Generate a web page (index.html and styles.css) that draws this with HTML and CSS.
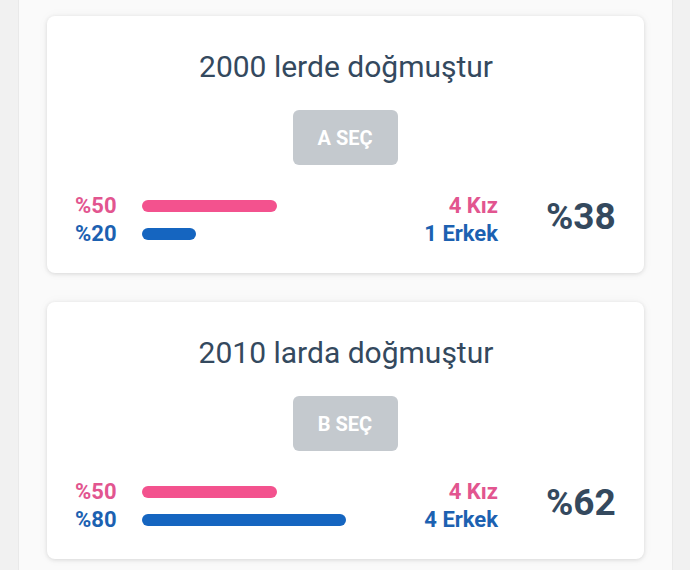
FILE: index.html
```html
<!DOCTYPE html>
<html lang="tr">
<head>
  <meta charset="UTF-8" />
  <title>Anket sonuçları</title>
  <meta name="viewport" content="width=device-width, initial-scale=1.0" />
  <link rel="stylesheet" href="styles.css">
</head>
<body>

  <div class="column">

    <div class="card">
      <h2 class="question">2000 lerde doğmuştur</h2>
      <button class="pick">A SEÇ</button>
      <div class="stats">
        <span class="label girl">%50</span>
        <div class="track"><div class="bar girl-bar" style="width:135px"></div></div>
        <span class="count girl">4 Kız</span>
        <span class="total">%38</span>

        <span class="label boy">%20</span>
        <div class="track"><div class="bar boy-bar" style="width:54px"></div></div>
        <span class="count boy">1 Erkek</span>
      </div>
    </div>

    <div class="card">
      <h2 class="question">2010 larda doğmuştur</h2>
      <button class="pick">B SEÇ</button>
      <div class="stats">
        <span class="label girl">%50</span>
        <div class="track"><div class="bar girl-bar" style="width:135px"></div></div>
        <span class="count girl">4 Kız</span>
        <span class="total">%62</span>

        <span class="label boy">%80</span>
        <div class="track"><div class="bar boy-bar" style="width:204px"></div></div>
        <span class="count boy">4 Erkek</span>
      </div>
    </div>

  </div>

</body>
</html>
```

FILE: styles.css
```css
:root {
  --ink: #34495e;
  --pink: #e2558f;
  --pink-bar: #f3528e;
  --blue: #1c61b1;
  --blue-bar: #1565c0;
  --font: Roboto, 'Liberation Sans', sans-serif;
}
html, body {
  height: 100%;
}
body {
  margin: 0;
  font-family: var(--font);
  background: #f1f1f1;
  overflow: hidden;
}
.column {
  width: 597px;
  min-height: 100%;
  margin-left: 18px;
  padding: 16px 28px;
  background: #fafafa;
  border-left: 1px solid #e9e9e9;
  border-right: 1px solid #e9e9e9;
}
.card {
  background: #fff;
  border-radius: 8px;
  box-shadow: 0 1px 4px rgba(0, 0, 0, 0.12), 0 0 12px rgba(0, 0, 0, 0.04);
  padding: 33px 27px 25px 28px;
  margin-bottom: 29px;
  text-align: center;
}
.question {
  margin: 0;
  font-size: 30px;
  line-height: 35px;
  font-weight: 400;
  color: var(--ink);
}
.pick {
  display: block;
  width: 105px;
  height: 55px;
  margin: 26px auto 0;
  border: none;
  border-radius: 6px;
  background: #c4c9ce;
  color: #fff;
  font-family: var(--font);
  font-size: 20px;
  font-weight: 700;
  position: relative;
  left: -1px;
}
.stats {
  display: grid;
  grid-template-columns: 67px 1fr auto auto;
  grid-template-rows: 28px 28px;
  align-items: center;
  margin-top: 27px;
  text-align: left;
  font-size: 22px;
  font-weight: 700;
  line-height: 28px;
}
.label.girl, .count.girl {
  color: var(--pink);
}
.label.boy, .count.boy {
  color: var(--blue);
}
.count {
  text-align: right;
}
.track {
  height: 12px;
}
.bar {
  height: 12px;
  border-radius: 6px;
}
.girl-bar {
  background: var(--pink-bar);
}
.boy-bar {
  background: var(--blue-bar);
}
.total {
  grid-column: 4;
  grid-row: 1 / span 2;
  width: 71px;
  margin-left: 48px;
  padding-bottom: 6px;
  font-size: 37px;
  font-weight: 700;
  color: var(--ink);
}
```
